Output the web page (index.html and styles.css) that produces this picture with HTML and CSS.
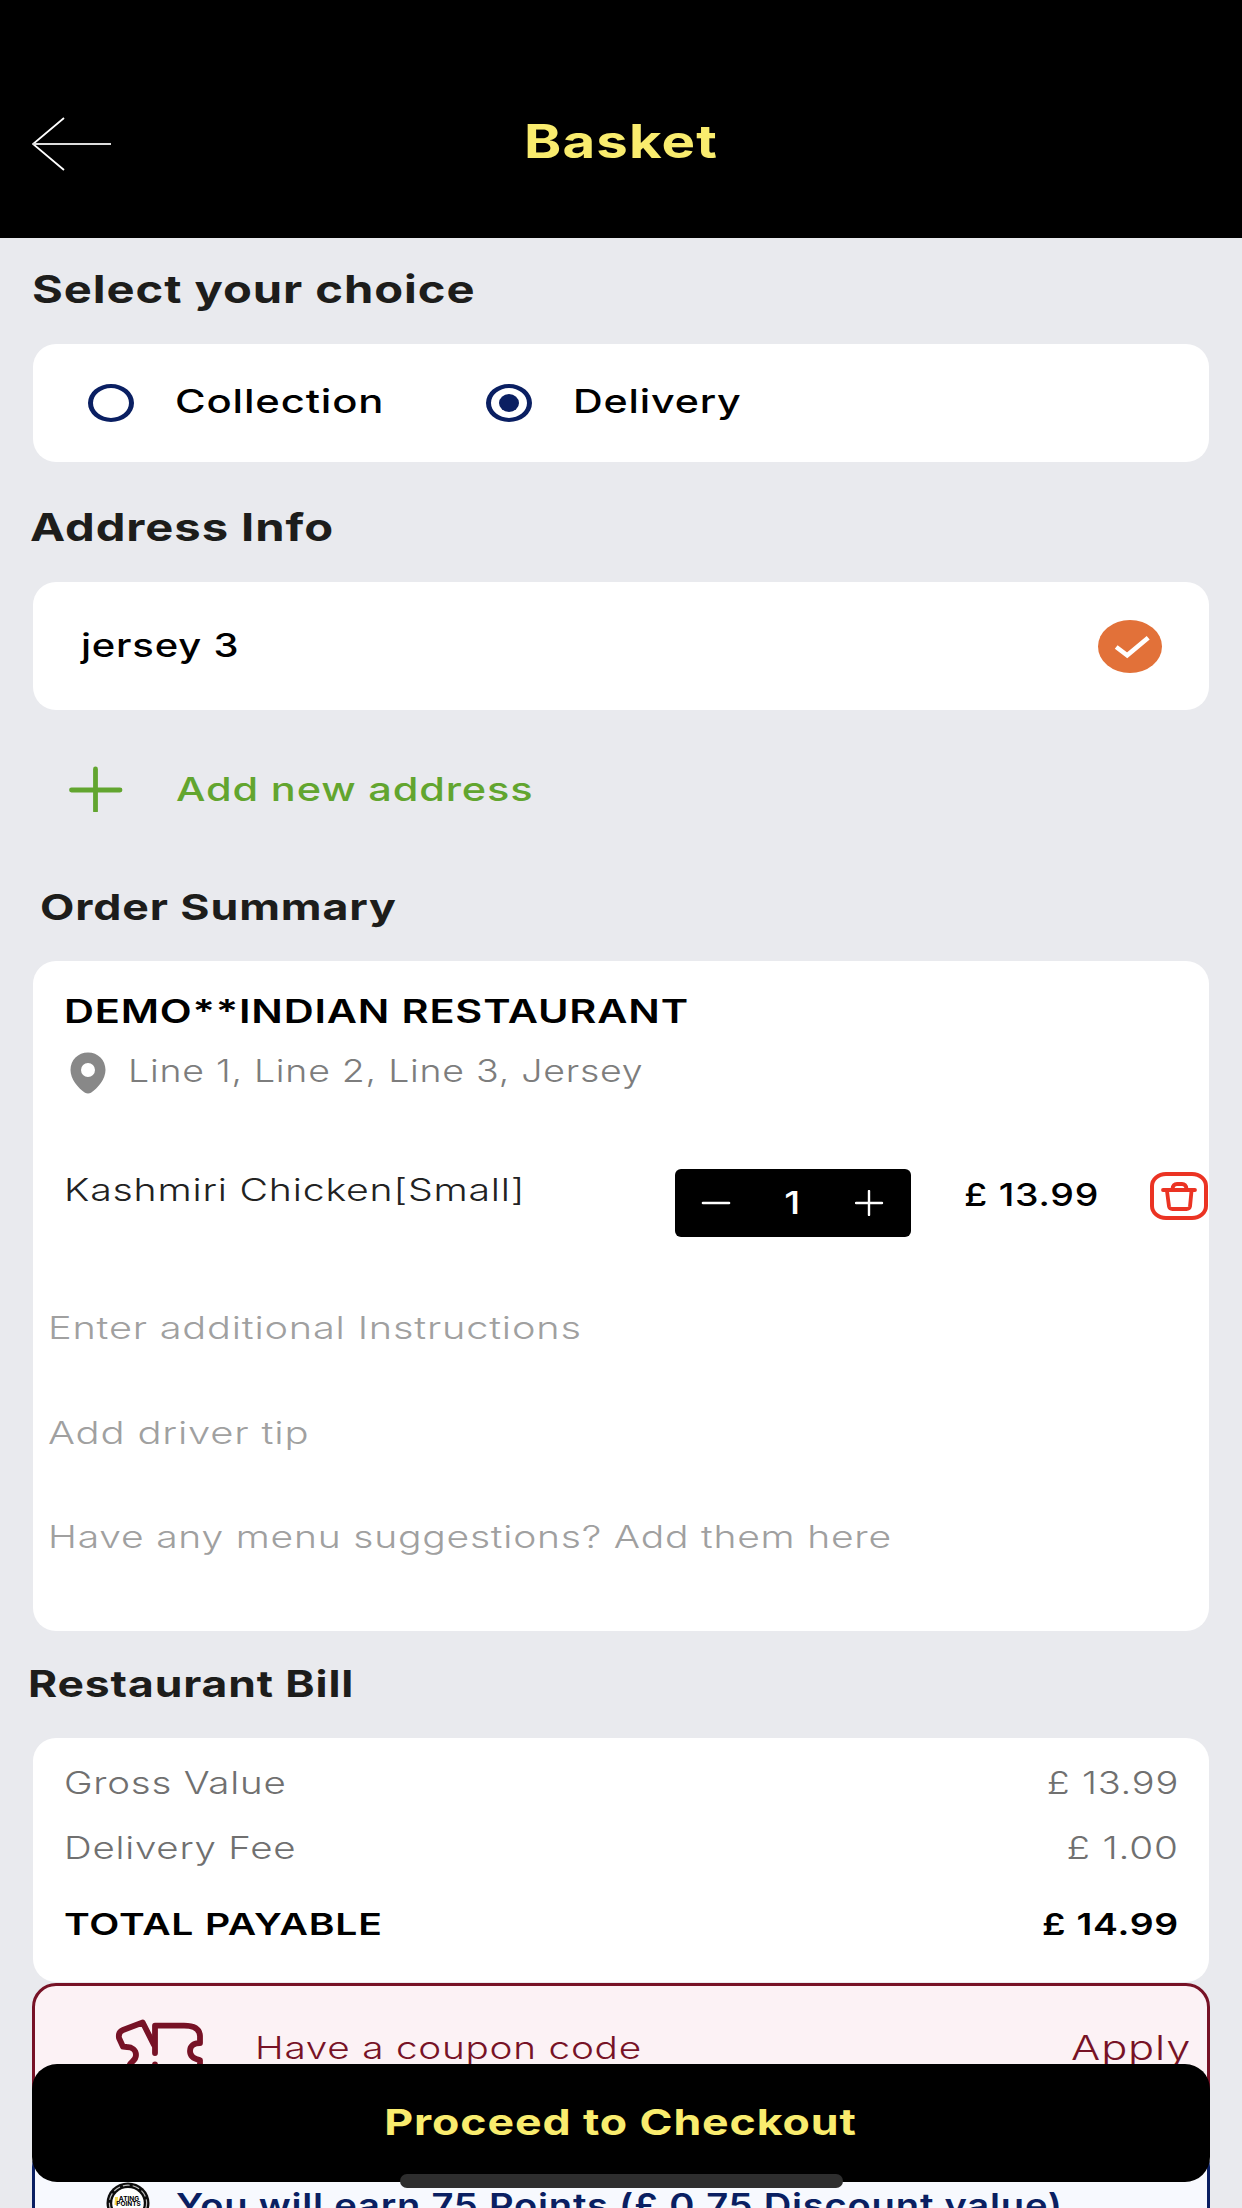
FILE: index.html
```html
<!DOCTYPE html>
<html lang="en">
<head>
  <meta charset="UTF-8" />
  <meta name="viewport" content="width=device-width, initial-scale=1.0"/>
  <title>Basket</title>
  <link rel="stylesheet" href="styles.css">
</head>
<body>

  <!-- HEADER -->
  <header class="header">
    <svg class="back" width="82" height="56" viewBox="0 0 82 56" fill="none" stroke="#fff">
      <path d="M32 2 L1 28 L32 54" stroke-width="1.8"/>
      <path d="M1 28 H79" stroke="#ddd" stroke-width="2"/>
    </svg>
    <h1 class="wide header-title">Basket</h1>
  </header>

  <main class="content">

    <!-- COLLECTION / DELIVERY -->
    <h2 class="heading heading-choice"><span class="wide">Select your choice</span></h2>
    <section class="card choice">
      <div class="option">
        <span class="radio"></span>
        <span class="wide label-collection">Collection</span>
      </div>
      <div class="option">
        <span class="radio checked"></span>
        <span class="wide">Delivery</span>
      </div>
    </section>

    <!-- ADDRESS -->
    <h2 class="heading heading-address"><span class="wide">Address Info</span></h2>
    <section class="card address">
      <span class="wide">jersey 3</span>
      <svg class="tick" width="64" height="53" viewBox="0 0 64 53">
        <ellipse cx="32" cy="26.5" rx="32" ry="26.5" fill="#e27139"/>
        <path d="M18.2 27 L29.2 35.3 L50.2 17.7" fill="none" stroke="#fff" stroke-width="4.6"/>
      </svg>
    </section>

    <div class="add-address">
      <svg width="54" height="46" viewBox="0 0 54 46" stroke="#62a52f" stroke-width="4.8" stroke-linecap="round">
        <path d="M2.500 24 H51 M26.500 3 V45"/>
      </svg>
      <span class="wide">Add new address</span>
    </div>

    <!-- ORDER -->
    <h2 class="heading heading-order"><span class="wide">Order Summary</span></h2>
    <section class="card order">
      <div class="restaurant"><span class="wide">DEMO**INDIAN RESTAURANT</span></div>
      <div class="location">
        <svg width="36" height="42" viewBox="0 0 36 42">
          <path fill="#888" fill-rule="evenodd" d="M18 .5 C8 .5 .5 8 .5 18 C.5 27 8 36 15 40.8 Q18 42 21 40.8 C28 36 35.5 27 35.5 18 C35.5 8 28 .5 18 .5 Z M18 11 A7 7 0 1 1 18 25 A7 7 0 1 1 18 11 Z"/>
        </svg>
        <span class="wide">Line 1, Line 2, Line 3, Jersey</span>
      </div>

      <div class="item">
        <span class="wide item-name">Kashmiri Chicken[Small]</span>
        <div class="stepper">
          <svg width="30" height="26" viewBox="0 0 30 26" stroke="#fff" stroke-width="2.6" stroke-linecap="round"><path d="M2 13 H28"/></svg>
          <span class="wide">1</span>
          <svg width="30" height="26" viewBox="0 0 30 26" stroke="#fff" stroke-width="2.4" stroke-linecap="round"><path d="M1 13 H27 M14 1 V25"/></svg>
        </div>
        <span class="wide item-price">£ 13.99</span>
        <svg class="trash" width="58" height="48" viewBox="0 0 58 48" fill="none" stroke="#eb3323" stroke-linecap="round" stroke-linejoin="round">
          <rect x="2" y="2" width="54" height="44" rx="14" ry="12" stroke-width="4"/>
          <path stroke-width="3.8" d="M13 18 H45 M17 19 L19 34.5 Q19.5 37 22.5 37 H36.5 Q39.5 37 40 34.5 L41.5 19 M22.5 17 Q23 12 27 12 H32 Q36 12 36.5 17"/>
        </svg>
      </div>

      <div class="fields">
        <div class="field"><span class="wide">Enter additional Instructions</span></div>
        <div class="field"><span class="wide field-tip">Add driver tip</span></div>
        <div class="field"><span class="wide field-menu">Have any menu suggestions? Add them here</span></div>
      </div>
    </section>

    <!-- BILL -->
    <h2 class="heading heading-bill"><span class="wide">Restaurant Bill</span></h2>
    <section class="card bill">
      <div class="bill-row">
        <span class="wide">Gross Value</span>
        <span class="wide amount">£ 13.99</span>
      </div>
      <div class="bill-row fee">
        <span class="wide">Delivery Fee</span>
        <span class="wide amount">£ 1.00</span>
      </div>
      <div class="bill-row total">
        <span class="wide">TOTAL PAYABLE</span>
        <span class="wide amount">£ 14.99</span>
      </div>
    </section>

    <!-- COUPON -->
    <section class="coupon">
      <svg width="90" height="70" viewBox="0 0 90 70" fill="none" stroke="#771226" stroke-width="5.8" stroke-linecap="round" stroke-linejoin="round">
        <path d="M15 48 C17 43 22 43 22 37 C22 32 18 29 13 29 L9 28.7 L5 20 Q4 14 9 12 L28.7 4.5 L40 27"/>
        <path d="M41 35 V7.7 H70 Q85.5 7.7 86 18 V25 C80 25 76 28 76 33 C76 38 80 41 86 42 V50"/>
        <path d="M41 46.5 V60"/>
      </svg>
      <span class="wide">Have a coupon code</span>
      <span class="wide apply">Apply</span>
    </section>

    <!-- POINTS -->
    <section class="points">
      <svg width="44" height="42" viewBox="0 0 44 42">
        <ellipse cx="22" cy="21" rx="21.5" ry="20.5" fill="#0c0c0c"/>
        <ellipse cx="22" cy="21" rx="18.6" ry="17.8" fill="none" stroke="#bbb" stroke-width="1.2" stroke-dasharray="7 3"/>
        <ellipse cx="22" cy="21" rx="15.8" ry="15" fill="#fff"/>
        <path d="M9 15 H12 L11.5 23 H8.5 Z" fill="#f5dc50"/>
        <text x="23" y="18.5" class="badge-text">ATING</text>
        <text x="22.5" y="23.5" class="badge-text">POINTS</text>
      </svg>
      <span class="wide">You will earn 75 Points (£ 0.75 Discount value)</span>
    </section>
  </main>

  <button class="checkout"><span class="wide">Proceed to Checkout</span></button>
  <div class="home-indicator"></div>

</body>
</html>
```
FILE: styles.css
```css
* {
  box-sizing: border-box;
}

body {
  margin: 0;
  height: 2208px;
  overflow: hidden;
  background: #e9eaee;
  font-family: Inter, sans-serif;
  color: #000;
}

svg {
  display: block;
  flex: none;
}

/* extended lettering */
.wide {
  display: inline-block;
  white-space: nowrap;
  letter-spacing: 0.02em;
  transform: scaleX(1.248);
  transform-origin: left;
}

/* Header */
.header {
  display: grid;
  grid-template-columns: 82px 1fr 82px;
  height: 238px;
  padding: 0 32px;
  background: #000;
}

.back {
  margin-top: 116px;
}

.header-title {
  margin: 0;
  padding-top: 101px;
  line-height: 80px;
  font-size: 46px;
  text-align: center;
  color: #f9ec6e;
  transform: scaleX(1.225);
  transform-origin: center;
}

/* Cards and headings */
.content {
  padding: 0 32px;
}

.card {
  margin: 0 1px;
  background: #fff;
  border-radius: 23px;
}

.heading {
  margin: 0;
  font-size: 38px;
  font-weight: 700;
  color: #1d1d1b;
}

.heading .wide {
  transform: scaleX(1.24);
}

.heading-choice {
  height: 106px;
  line-height: 103px;
}

.heading-address {
  height: 120px;
  padding-top: 10px;
  line-height: 110px;
  margin-left: -2px;
}

.heading-order {
  height: 94px;
  padding-left: 8px;
  line-height: 80px;
  font-size: 36px;
}

.heading-bill {
  height: 107px;
  margin-left: -4px;
  line-height: 106px;
  font-size: 37px;
}

.heading-bill .wide {
  transform: scaleX(1.2);
}

/* Collection / delivery */
.choice {
  display: grid;
  grid-template-columns: 398px 1fr;
  height: 118px;
  padding-left: 55px;
  line-height: 114px;
  font-size: 33px;
  font-weight: 500;
}

.option {
  display: flex;
  align-items: flex-start;
  gap: 41px;
}

.label-collection {
  transform: scaleX(1.267);
}

.radio {
  display: flex;
  align-items: center;
  justify-content: center;
  width: 46px;
  height: 38px;
  margin-top: 40px;
  border: solid #0a1f62;
  border-width: 4px 5px;
  border-radius: 50%;
}

.radio.checked::after {
  content: "";
  width: 20px;
  height: 18px;
  border-radius: 50%;
  background: #0a1f62;
}

/* Address */
.address {
  display: flex;
  justify-content: space-between;
  height: 128px;
  padding: 0 47px 0 48px;
  line-height: 127px;
  font-size: 32px;
  font-weight: 500;
}

.tick {
  margin-top: 38px;
}

.add-address {
  display: flex;
  align-items: center;
  gap: 53px;
  height: 157px;
  padding-left: 37px;
  font-size: 33px;
  font-weight: 500;
  line-height: 158px;
  color: #62a52f;
}

.add-address .wide {
  transform: scaleX(1.258);
}

/* Order */
.order {
  height: 670px;
  padding: 21px 0 0 31px;
}

.restaurant {
  height: 60px;
  line-height: 60px;
  font-size: 32px;
  font-weight: 600;
}

.restaurant .wide {
  transform: scaleX(1.297);
}

.location {
  display: flex;
  gap: 22px;
  height: 58px;
  padding-left: 6px;
  line-height: 58px;
  font-size: 31px;
  font-weight: 300;
  color: #7d7d7d;
}

.location svg {
  margin-top: 10px;
}

.location .wide {
  transform: scaleX(1.208);
}

.item {
  display: grid;
  grid-template-columns: 611px 236px 239px 58px;
  align-items: start;
  height: 68px;
  margin-top: 69px;
  font-size: 31px;
}

.item-name {
  line-height: 41px;
  font-weight: 300;
  color: #222;
  transform: scaleX(1.266);
}

.item-price {
  margin-left: 53px;
  line-height: 51px;
  font-weight: 500;
  transform: scaleX(1.21);
}

.stepper {
  display: flex;
  align-items: center;
  justify-content: space-between;
  height: 68px;
  padding: 0 26px;
  border-radius: 6px;
  background: #000;
  color: #fff;
  font-weight: 500;
  line-height: 66px;
}

.stepper .wide {
  transform-origin: center;
}

.trash {
  margin-top: 3px;
}

.fields {
  margin: 39px 0 0 -16px;
  font-size: 31px;
  font-weight: 300;
  color: #a0a0a0;
}

.field {
  height: 104.5px;
  line-height: 104.5px;
}

.field .wide {
  transform: scaleX(1.281);
}

.field .field-tip {
  transform: scaleX(1.291);
}

.field .field-menu {
  transform: scaleX(1.259);
}

/* Bill */
.bill {
  height: 244px;
  padding: 12px 30px 0 31px;
  font-size: 31px;
  font-weight: 300;
  color: #707070;
}

.bill-row {
  display: flex;
  justify-content: space-between;
  line-height: 65px;
}

.bill-row .wide {
  transform: scaleX(1.24);
}

.bill-row .amount {
  transform: scaleX(1.225);
  transform-origin: right;
}

.bill-row.fee {
  line-height: 66px;
}

.bill-row.fee .amount {
  transform: scaleX(1.25);
}

.bill-row.total {
  line-height: 86px;
  font-size: 30px;
  font-weight: 600;
  color: #000;
}

.bill-row.total .wide {
  transform: scaleX(1.303);
}

.bill-row.total .amount {
  transform: scaleX(1.245);
}

/* Coupon */
.coupon {
  display: flex;
  align-items: flex-start;
  height: 160px;
  margin-top: 1px;
  padding: 0 16px 0 79px;
  border: 3px solid #771226;
  border-radius: 24px;
  background: #fcf2f5;
  line-height: 123px;
  font-size: 31px;
  font-weight: 300;
  color: #771226;
}

.coupon svg {
  margin: 32px 51px 0 0;
}

.coupon .apply {
  margin-left: auto;
  font-size: 34px;
  transform: scaleX(1.275);
  transform-origin: right;
}

/* Points */
.points {
  display: flex;
  gap: 26px;
  height: 130px;
  padding-left: 71px;
  border: 3px solid #0a1f62;
  border-radius: 24px;
  background: #f7f9fe;
  line-height: 118px;
  font-size: 33px;
  font-weight: 600;
  color: #0a1f62;
}

.points svg {
  margin-top: 36px;
}

.points .wide {
  transform: scaleX(1.157);
}

.badge-text {
  font-size: 6.5px;
  font-weight: 700;
  text-anchor: middle;
}

.checkout {
  position: fixed;
  left: 32px;
  right: 32px;
  bottom: 26px;
  height: 118px;
  padding: 0 0 3px;
  border: none;
  border-radius: 25px;
  background: #000;
  color: #f9ec6e;
  font-family: inherit;
  font-size: 36px;
  font-weight: 700;
}

.checkout .wide {
  transform: scaleX(1.24);
  transform-origin: center;
}

.home-indicator {
  position: fixed;
  left: 400px;
  bottom: 20px;
  width: 443px;
  height: 14px;
  border-radius: 7px;
  background: #2e2e2e;
}
```
